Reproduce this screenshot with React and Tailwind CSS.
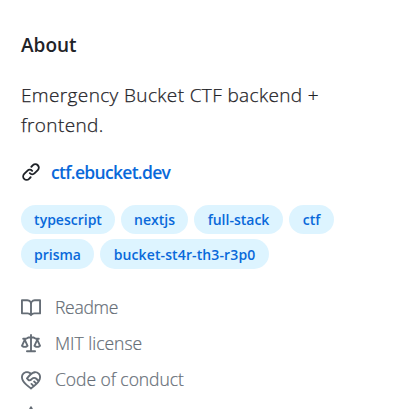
const paths = {
  link: "m7.775 3.275 1.25-1.25a3.5 3.5 0 1 1 4.95 4.95l-2.5 2.5a3.5 3.5 0 0 1-4.95 0 .751.751 0 0 1 .018-1.042.751.751 0 0 1 1.042-.018 1.998 1.998 0 0 0 2.83 0l2.5-2.5a2.002 2.002 0 0 0-2.83-2.83l-1.25 1.25a.751.751 0 0 1-1.042-.018.751.751 0 0 1-.018-1.042Zm-4.69 9.64a1.998 1.998 0 0 0 2.83 0l1.25-1.25a.751.751 0 0 1 1.042.018.751.751 0 0 1 .018 1.042l-1.25 1.25a3.5 3.5 0 1 1-4.95-4.95l2.5-2.5a3.5 3.5 0 0 1 4.95 0 .751.751 0 0 1-.018 1.042.751.751 0 0 1-1.042.018 1.998 1.998 0 0 0-2.83 0l-2.5 2.5a1.998 1.998 0 0 0 0 2.83Z",
  book: "M0 1.75A.75.75 0 0 1 .75 1h4.253c1.227 0 2.317.59 3 1.501A3.743 3.743 0 0 1 11.006 1h4.245a.75.75 0 0 1 .75.75v10.5a.75.75 0 0 1-.75.75h-4.507a2.25 2.25 0 0 0-1.591.659l-.622.621a.75.75 0 0 1-1.06 0l-.622-.621A2.25 2.25 0 0 0 5.258 13H.75a.75.75 0 0 1-.75-.75Zm7.251 10.324.004-5.073-.002-2.253A2.25 2.25 0 0 0 5.003 2.5H1.5v9h3.757a3.75 3.75 0 0 1 1.994.574ZM8.755 4.75l-.004 7.322a3.752 3.752 0 0 1 1.992-.572H14.5v-9h-3.495a2.25 2.25 0 0 0-2.25 2.25Z",
  law: "M8.75.75V2h.985c.304 0 .603.08.867.231l1.29.736c.038.022.08.033.124.033h2.234a.75.75 0 0 1 0 1.5h-.427l2.111 4.692a.75.75 0 0 1-.154.838l-.53-.53.529.531-.001.002-.002.002-.006.006-.006.005-.01.01-.045.04c-.21.176-.441.327-.686.45C14.556 10.78 13.88 11 13 11a4.498 4.498 0 0 1-2.023-.454 3.544 3.544 0 0 1-.686-.45l-.045-.04-.016-.015-.006-.006-.004-.004v-.001a.75.75 0 0 1-.154-.838L12.178 4.5h-.162c-.305 0-.604-.079-.868-.231l-1.29-.736a.245.245 0 0 0-.124-.033H8.75V13h2.5a.75.75 0 0 1 0 1.5h-6.5a.75.75 0 0 1 0-1.5h2.5V3.5h-.984a.245.245 0 0 0-.124.033l-1.289.737c-.265.15-.564.23-.869.23h-.162l2.112 4.692a.75.75 0 0 1-.154.838l-.53-.53.529.531-.001.002-.002.002-.006.006-.016.015-.045.04c-.21.176-.441.327-.686.45C4.556 10.78 3.88 11 3 11a4.498 4.498 0 0 1-2.023-.454 3.544 3.544 0 0 1-.686-.45l-.045-.04-.016-.015-.006-.006-.004-.004v-.001a.75.75 0 0 1-.154-.838L2.178 4.5H1.75a.75.75 0 0 1 0-1.5h2.234a.249.249 0 0 0 .125-.033l1.288-.737c.265-.15.564-.23.869-.23h.984V.75a.75.75 0 0 1 1.5 0Zm2.945 8.477c.285.135.718.273 1.305.273s1.02-.138 1.305-.273L13 6.327Zm-10 0c.285.135.718.273 1.305.273s1.02-.138 1.305-.273L3 6.327Z",
  conduct: "M8.048 2.241c.964-.709 2.079-1.238 3.325-1.241a4.616 4.616 0 0 1 3.282 1.355c.41.408.757.86.996 1.428.238.568.348 1.206.347 1.968 0 2.193-1.505 4.254-3.081 5.862-1.496 1.526-3.213 2.796-4.249 3.563l-.22.163a.749.749 0 0 1-.895 0l-.221-.163c-1.036-.767-2.753-2.037-4.249-3.563C1.51 10.008.007 7.952.002 5.762a4.614 4.614 0 0 1 1.353-3.407C3.123.585 6.223.537 8.048 2.24Zm-1.153.983c-1.25-1.033-3.321-.967-4.48.191a3.115 3.115 0 0 0-.913 2.335c0 1.556 1.109 3.24 2.652 4.813C5.463 11.898 6.96 13.032 8 13.805c.353-.262.758-.565 1.191-.905l-1.326-1.223a.75.75 0 0 1 1.018-1.102l1.48 1.366c.328-.281.659-.577.984-.887L9.99 9.802a.75.75 0 1 1 1.019-1.103l1.384 1.28c.295-.329.566-.661.81-.995L12.92 8.7l-1.167-1.168c-.674-.671-1.78-.664-2.474.03-.268.269-.538.537-.802.797-.893.882-2.319.843-3.185-.032-.346-.35-.693-.697-1.043-1.047a.75.75 0 0 1-.04-1.016c.162-.191.336-.401.52-.623.62-.748 1.356-1.637 2.166-2.417Zm7.112 4.442c.313-.65.491-1.293.491-1.916v-.001c0-.614-.088-1.045-.23-1.385-.143-.339-.357-.633-.673-.949a3.111 3.111 0 0 0-2.218-.915c-1.092.003-2.165.627-3.226 1.602-.823.755-1.554 1.637-2.228 2.45l-.127.154.562.566a.755.755 0 0 0 1.066.02l.794-.79c1.258-1.258 3.312-1.31 4.594-.032.396.394.792.791 1.173 1.173Z",
  star: "M8 .25a.75.75 0 0 1 .673.418l1.882 3.815 4.21.612a.75.75 0 0 1 .416 1.279l-3.046 2.97.719 4.192a.751.751 0 0 1-1.088.791L8 12.347l-3.766 1.98a.75.75 0 0 1-1.088-.79l.72-4.194L.818 6.374a.75.75 0 0 1 .416-1.28l4.21-.611L7.327.668A.75.75 0 0 1 8 .25Zm0 2.445L6.615 5.5a.75.75 0 0 1-.564.41l-3.097.45 2.24 2.184a.75.75 0 0 1 .216.664l-.528 3.084 2.769-1.456a.75.75 0 0 1 .698 0l2.77 1.456-.53-3.084a.75.75 0 0 1 .216-.664l2.24-2.183-3.096-.45a.75.75 0 0 1-.564-.41L8 2.694Z",
};

function Icon({ name }) {
  return (
    <svg viewBox="0 0 16 16" className="size-5 shrink-0 fill-current" aria-hidden="true">
      <path d={paths[name]} />
    </svg>
  );
}

const topics = [
  ["typescript", "h-[29px] w-[94px]"],
  ["nextjs", "h-[29px] w-[67px]"],
  ["full-stack", "h-[29px] w-[89px]"],
  ["ctf", "h-[29px] w-[45px]"],
  ["prisma", "h-[30px] w-[73px]"],
  ["bucket-st4r-th3-r3p0", "h-[30px] w-[169px] tracking-[0.12px]"],
];

const details = [
  ["book", "Readme", "tracking-[-0.3px]"],
  ["law", "MIT license", "tracking-[0px]"],
  ["conduct", "Code of conduct", "tracking-[-0.05px]"],
];

export default function App() {
  return (
    <aside className="h-[409px] w-[415px] overflow-hidden bg-white pt-[30px] pl-[21px] font-['Open_Sans',sans-serif] text-[#1f2328]">
      <h2 className="text-[19px] leading-[30px] font-semibold">About</h2>
      <p className="mt-5 w-[330px] text-[19px] leading-[30px] font-light tracking-[0.37px] [-webkit-text-stroke:0.25px]">
        Emergency Bucket CTF backend +<br />
        frontend.
      </p>
      <div className="mt-[17px] flex h-[30px] items-center gap-[10px]">
        <Icon name="link" />
        <a className="text-[17.5px] leading-[30px] font-semibold tracking-[-0.7px] text-[#0969da]">ctf.ebucket.dev</a>
      </div>
      <div className="mt-[18px] flex w-[330px] flex-wrap gap-x-[6px] gap-y-[5px]">
        {topics.map(([label, size]) => (
          <a
            key={label}
            className={`${size} flex items-center justify-center rounded-full bg-[#ddf4ff] text-[14px] font-semibold whitespace-nowrap text-[#0969da]`}
          >
            {label}
          </a>
        ))}
      </div>
      <ul className="mt-[21px] text-[#656d76]">
        {details.map(([icon, label, tracking]) => (
          <li key={icon} className="flex h-9 items-center gap-[14px]">
            <Icon name={icon} />
            <span className={`pb-0.5 text-[17.5px] leading-[30px] font-light [-webkit-text-stroke:0.2px] ${tracking}`}>{label}</span>
          </li>
        ))}
        <li className="flex h-9 items-center">
          <Icon name="star" />
        </li>
      </ul>
    </aside>
  );
}
